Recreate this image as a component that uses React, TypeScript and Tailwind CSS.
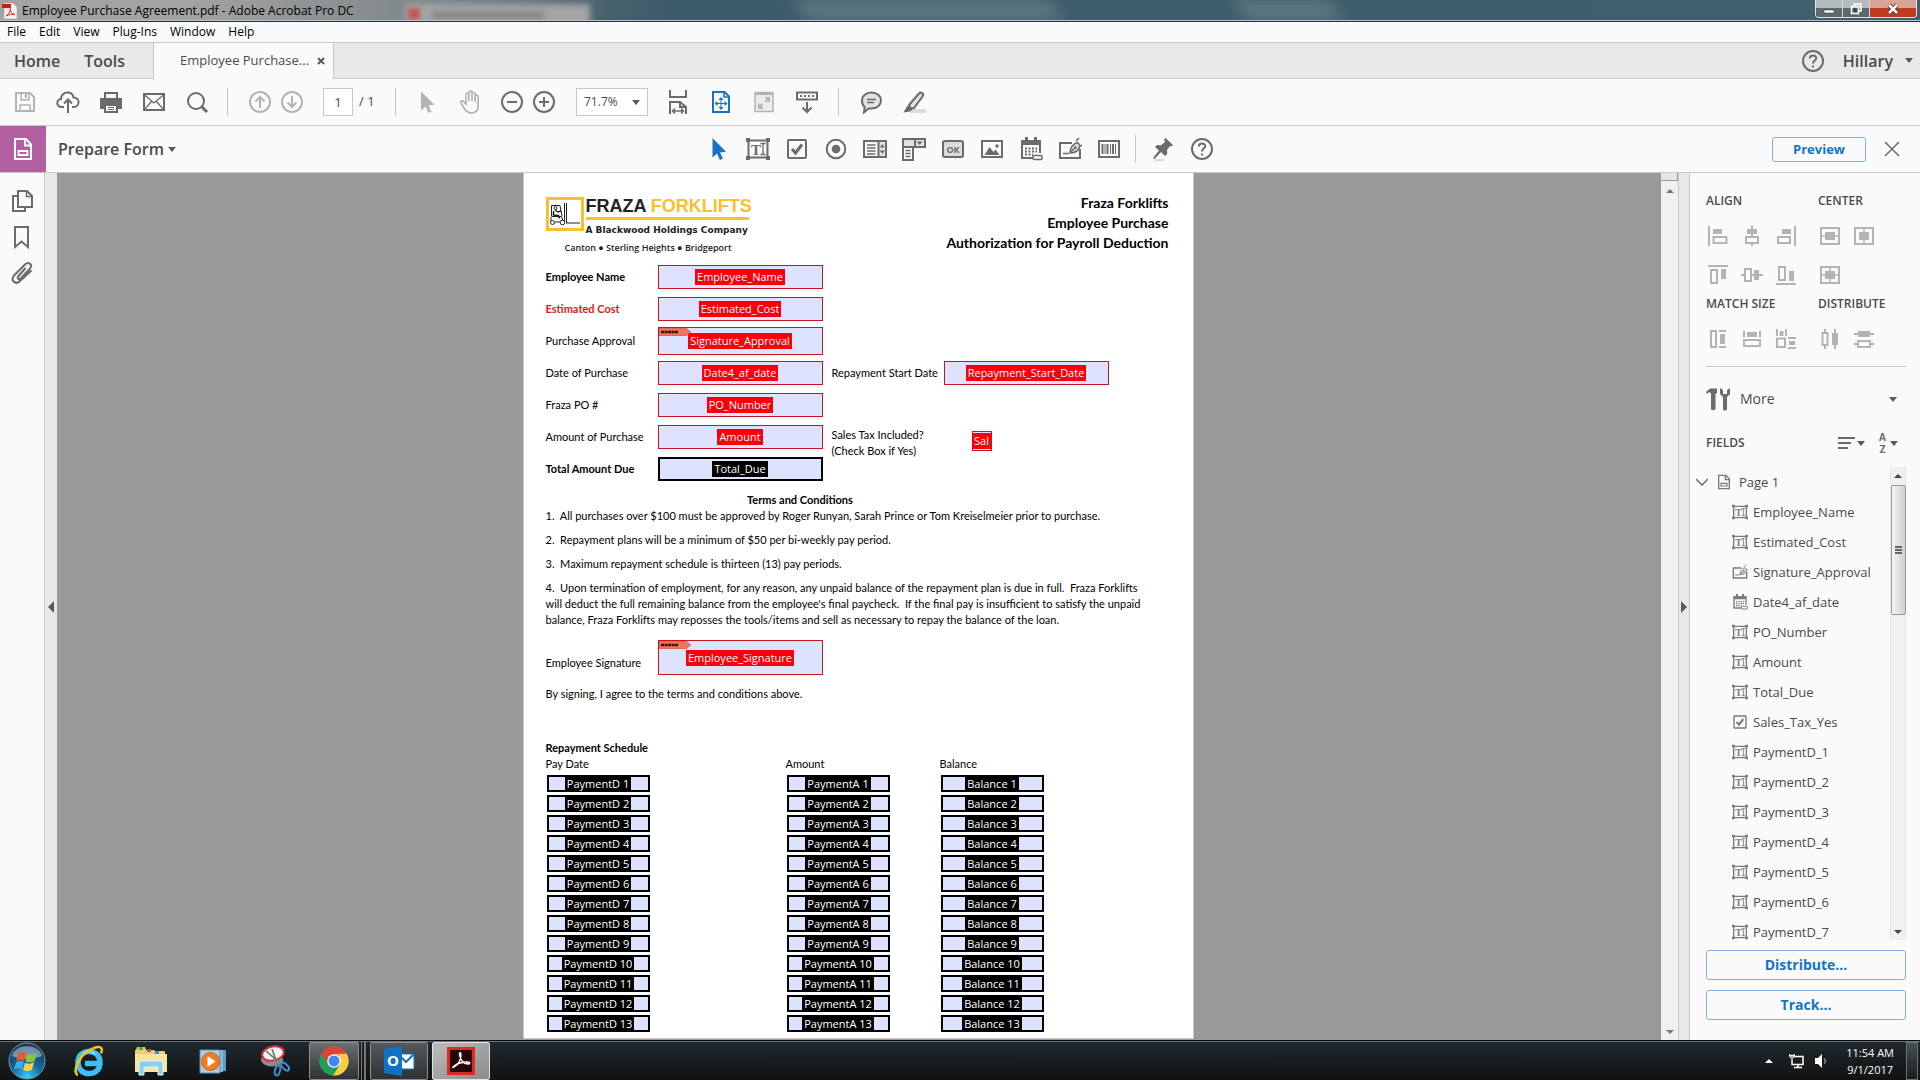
import React, { ReactNode } from "react";

type IconProps = { children: ReactNode; className?: string };

const Icon = ({ children, className = "" }: IconProps) => (
  <svg
    viewBox="0 0 24 24"
    fill="none"
    stroke="currentColor"
    strokeWidth="2"
    className={`size-6 shrink-0 ${className}`}
    aria-hidden="true"
  >
    {children}
  </svg>
);

const Caret = ({ className = "" }: { className?: string }) => (
  <svg viewBox="0 0 8 5" className={`h-[5px] w-2 shrink-0 fill-[#5a5a5a] ${className}`} aria-hidden="true">
    <path d="M0 0h8L4 5z" />
  </svg>
);

const SaveIcon = () => (
  <Icon>
    <path d="M3 3h14l4 4v14H3z" />
    <path d="M8 3v7h8V3M7 21v-6h10v6" strokeWidth="1.500" />
    <path d="M13 4v4" />
  </Icon>
);
const CloudIcon = () => (
  <Icon>
    <path d="M8 17H5.500a4 4 0 0 1 -.5-8C5 5 8 2.500 11.500 2.500c3 0 5.500 2 6 5 3 0 5 2 5 4.700S20.500 17 18 17h-2" />
    <path d="M12 23V10M8 13.500l4-4 4 4" />
  </Icon>
);
const PrintIcon = () => (
  <Icon>
    <path d="M6 8V3h12v5" />
    <path d="M1 8h22v11h-4v-4H5v4H1z" fill="currentColor" stroke="none" />
    <path d="M6 15h12v7H6z" />
    <path d="M9 17.500h6M9 19.500h6" strokeWidth="1" />
  </Icon>
);
const MailIcon = () => (
  <Icon>
    <path d="M2 4h20v16H2z" />
    <path d="M2 4.500l10 8.500 10-8.500M2.500 19.500l7-8M21.500 19.500l-7-8" strokeWidth="1.300" />
  </Icon>
);
const SearchIcon = () => (
  <Icon>
    <circle cx="11" cy="11" r="8" />
    <path d="M16.500 16.500L22 22" strokeWidth="3" />
  </Icon>
);
const UpIcon = () => (
  <Icon>
    <circle cx="12" cy="12" r="10" />
    <path d="M12 18V7M7.500 11.500L12 7l4.500 4.500" />
  </Icon>
);
const DownIcon = () => (
  <Icon>
    <circle cx="12" cy="12" r="10" />
    <path d="M12 6v11M7.500 12.500L12 17l4.500-4.500" />
  </Icon>
);
const PointerIcon = () => (
  <Icon>
    <path d="M5 1.500v19l4.500-4 3 6.500 3-1.400-3-6.300 6-.6z" fill="currentColor" stroke="none" />
  </Icon>
);
const HandIcon = () => (
  <Icon>
    <path
      d="M7 14V4.500c0-2 2.800-2 2.800 0V11V2.800c0-2.300 3.200-2.300 3.200 0V11V4c0-2.200 3.100-2.200 3.100 0V12V6.500c0-2.200 3-2.200 3 0v9.500c0 4.500-2.400 7-6.600 7-3.700 0-5.500-1.500-7.500-5l-3-4.800c-1-2.200 1.300-3 2.700-1.600z"
      strokeWidth="1.700"
    />
  </Icon>
);
const MinusIcon = () => (
  <Icon>
    <circle cx="12" cy="12" r="10" />
    <path d="M7 12h10" />
  </Icon>
);
const PlusIcon = () => (
  <Icon>
    <circle cx="12" cy="12" r="10" />
    <path d="M7 12h10M12 7v10" />
  </Icon>
);
const FitWidthIcon = () => (
  <Icon>
    <path d="M4 0v7h16V0M4 24V12h10l6 5v7M14 12v5h6" />
    <path d="M6.500 21h11M9 18.500L6.500 21 9 23.500M15 18.500l2.500 2.500-2.500 2.500" strokeWidth="1.500" />
  </Icon>
);
const FitPageIcon = () => (
  <Icon className="text-[#1473c6]">
    <path d="M4 2h11.500L20 6.500V22H4z" />
    <path d="M15 2v5h5" strokeWidth="1.500" />
    <path d="M12 7l-2.500 3h5zM12 20l-2.500-3h5zM5.500 13.500l3-2.500v5zM18.500 13.500l-3-2.500v5z" fill="currentColor" stroke="none" />
    <path d="M12 9v9M8 13.500h8" strokeWidth="1" />
  </Icon>
);
const FullScreenIcon = () => (
  <Icon>
    <path d="M3 2.500h18v19H3z" fill="#ececec" strokeWidth="1.500" />
    <path d="M3 4h18" strokeWidth="2" />
    <path d="M12.500 7H18v6zM6 13v6h6z" fill="currentColor" stroke="none" />
    <path d="M13.500 12l3-3.500M7.500 17.500l3-3.500" strokeWidth="2" />
  </Icon>
);
const KeyboardIcon = () => (
  <Icon>
    <path d="M2 2.500h20v7H2z" />
    <path d="M5 6h14" strokeDasharray="2 2" />
    <path d="M12 12v10M7.500 17.500L12 22l4.500-4.500" />
  </Icon>
);
const CommentIcon = () => (
  <Icon>
    <path d="M12.500 2.500c5.500 0 9.500 3.500 9.500 8s-4 8-9.500 8l-3 0-4.500 4 .7-5.500C3.700 15.500 3 13 3 10.500c0-4.500 4-8 9.500-8z" fill="#e3e3e3" />
    <path d="M8 9.500h9M8 12.500h7" strokeWidth="1.300" />
  </Icon>
);
const HighlightIcon = () => (
  <Icon>
    <path d="M8 19h16v4H8z" fill="#dcdcdc" stroke="none" />
    <path d="M7 15L17 3.500c2-2 5 0 3.800 2.500L12 18l-3.500.5z" fill="#e3e3e3" />
    <path d="M5.500 15.500l5 4L8 21.500l-6.500 1z" fill="currentColor" stroke="none" />
  </Icon>
);

const TextFieldIcon = () => (
  <>
    <path d="M2.500 3.500h19v17h-19z" strokeWidth="2" />
    <path d="M0 1h4v4H0zM20 1h4v4h-4zM0 19h4v4H0zM20 19h4v4h-4z" fill="currentColor" stroke="none" />
    <text x="5" y="17.500" fontSize="15" fontFamily="Liberation Serif, serif" fontWeight="bold" fill="currentColor" stroke="none">
      T
    </text>
    <path d="M14.500 6.500h5M14.500 17.500h5M17 6.500v11" strokeWidth="1.300" />
  </>
);
const CheckFieldIcon = () => (
  <>
    <rect x="3" y="3" width="18" height="18" rx="1" />
    <path d="M7 12l3.500 4L17 7.500" strokeWidth="3.200" />
  </>
);
const CalendarFieldIcon = () => (
  <>
    <path d="M14 21H3V4h18v12" />
    <path d="M3 3h18v5H3zM6 0h3v4H6zM15 0h3v4h-3z" fill="currentColor" stroke="none" />
    <path d="M6 11.500h12M6 14.500h12M6 17.500h8" strokeDasharray="2 1.500" />
    <rect x="14" y="18.500" width="9" height="4" rx="1" fill="#fff" strokeWidth="1.500" />
  </>
);
const SignFieldIcon = () => (
  <>
    <path d="M14 6H2v15h20v-9" />
    <path d="M5 16.500h6" strokeWidth="1.500" />
    <path d="M12 16c0-5 2-8.500 7.500-10.500l2.500 3C21 13.500 17.500 16 12 16zM18 4l3-3M22.500 9.500l1.500-1.500M12 16l5.500-6" fill="#e3e3e3" strokeWidth="1.500" />
    <circle cx="17.500" cy="10.500" r="1" strokeWidth="1" />
  </>
);
const PageFormIcon = () => (
  <>
    <path d="M4 2h11l5 5.500V22H4z" />
    <path d="M14 2v6.500h6" />
    <path d="M7.500 14h9v4h-9z" strokeWidth="1.800" />
  </>
);
const HelpMark = () => (
  <>
    <circle cx="12" cy="12" r="10" />
    <path d="M8.800 9.500c0-4 6.400-4 6.400-.3 0 2.300-3.200 2.500-3.200 5.300M12 16.500v2" />
  </>
);

const formTools: { label: string; className?: string; icon: ReactNode }[] = [
  {
    label: "Select object",
    className: "text-[#1473c6]",
    icon: <path d="M5.500 1v19.500l4.500-4 3 6.500 3-1.500-3-6 6-.7z" fill="currentColor" stroke="none" />,
  },
  { label: "Text field", icon: <TextFieldIcon /> },
  { label: "Check box", icon: <CheckFieldIcon /> },
  {
    label: "Radio button",
    icon: (
      <>
        <circle cx="12" cy="12" r="9.300" />
        <circle cx="12" cy="12" r="4.300" fill="currentColor" stroke="none" />
      </>
    ),
  },
  {
    label: "List box",
    icon: (
      <>
        <path d="M15 4h8v16h-8z" fill="#e3e3e3" stroke="none" />
        <path d="M1 4h22v16H1zM15.500 4v16" />
        <path d="M4 8h8.500M4 11h8.500M4 14h8.500M4 17h8.500" strokeWidth="1.500" />
        <path d="M19.300 7l2.500 3.500h-5zM19.300 17l2.500-3.500h-5z" fill="currentColor" stroke="none" />
      </>
    ),
  },
  {
    label: "Dropdown",
    icon: (
      <>
        <path d="M1 2h22v8H1z" fill="#e3e3e3" />
        <path d="M13 2v8M1 10v13h10V10" />
        <path d="M14.500 4.500h6L17.500 8z" fill="currentColor" stroke="none" />
        <path d="M3.500 13.500h5M3.500 16.500h5M3.500 19.500h5" strokeWidth="1.300" />
      </>
    ),
  },
  {
    label: "Button",
    icon: (
      <>
        <rect x="2" y="4" width="20" height="16" rx="2" fill="#dcdcdc" />
        <text x="12" y="15.500" textAnchor="middle" fontSize="9" fontFamily="Open Sans, sans-serif" fontWeight="bold" fill="currentColor" stroke="none">
          OK
        </text>
      </>
    ),
  },
  {
    label: "Image field",
    icon: (
      <>
        <path d="M2 4h20v16H2z" />
        <path d="M4.500 18l5-8 4 5 2-2.500 4 5.500z" fill="currentColor" stroke="none" />
        <circle cx="17" cy="9" r="1.700" fill="currentColor" stroke="none" />
      </>
    ),
  },
  { label: "Date field", icon: <CalendarFieldIcon /> },
  { label: "Signature field", icon: <SignFieldIcon /> },
  {
    label: "Barcode",
    icon: (
      <>
        <path d="M2 4h20v16H2z" />
        <path d="M5.500 7v10M10.500 7v10M16 7v10" strokeWidth="2" />
        <path d="M8 7v10M13.500 7v10M18.500 7v10" strokeWidth="1" />
      </>
    ),
  },
];

const alignIcons = [
  <>
    <path d="M3 2v20" />
    <path d="M7 5h9v5H7z" fill="currentColor" stroke="none" />
    <path d="M7.500 13h13v6h-13z" />
  </>,
  <>
    <path d="M12 2v20" />
    <path d="M7 5h10v5H7z" fill="currentColor" stroke="none" />
    <path d="M6 13h12v6H6z" fill="#fafafa" />
  </>,
  <>
    <path d="M21 2v20" />
    <path d="M8 5h9v5H8z" fill="currentColor" stroke="none" />
    <path d="M4 13h12v6H4z" />
  </>,
  <>
    <path d="M2 3h20" />
    <path d="M5 7h6v13H5z" />
    <path d="M15 6h5v10h-5z" fill="currentColor" stroke="none" />
  </>,
  <>
    <path d="M1 12h22" />
    <path d="M5 6h6v12H5z" fill="#fafafa" />
    <path d="M14 7h5v10h-5z" fill="currentColor" stroke="none" />
  </>,
  <>
    <path d="M2 21h20" />
    <path d="M5 4h6v13H5z" />
    <path d="M15 8h5v10h-5z" fill="currentColor" stroke="none" />
  </>,
];

const centerIcons = [
  <>
    <path d="M3 4h18v16H3z" />
    <path d="M3 12h18" strokeWidth="1.500" />
    <path d="M7 8h10v8H7z" fill="currentColor" stroke="none" />
  </>,
  <>
    <path d="M3 4h18v16H3z" />
    <path d="M12 4v16" strokeWidth="1.500" />
    <path d="M7 8h10v8H7z" fill="currentColor" stroke="none" />
  </>,
  <>
    <path d="M3 4h18v16H3z" />
    <path d="M12 4v16M3 12h18" strokeWidth="1.500" />
    <path d="M7 8h10v8H7z" fill="currentColor" stroke="none" />
  </>,
];

const matchIcons = [
  <>
    <path d="M5 4h5v16H5z" />
    <path d="M13 4h7M13 20h7" />
    <path d="M14 7h5v10h-5z" fill="currentColor" stroke="none" />
  </>,
  <>
    <path d="M4 4v6M20 4v6" />
    <path d="M7 5h10v5H7z" fill="currentColor" stroke="none" />
    <path d="M4 13h16v6H4z" />
  </>,
  <>
    <path d="M3 2v7M12 2v7" />
    <path d="M5.500 4h4v5h-4zM15 14h6v4h-6z" fill="currentColor" stroke="none" />
    <path d="M3 11.500h8V20H3zM14 11h8M14 21h8" />
  </>,
];

const distributeIcons = [
  <>
    <path d="M7 2v4M7 18v4M17 2v20" />
    <path d="M4.500 6h5v12h-5z" />
    <path d="M14 6h6v12h-6z" fill="currentColor" stroke="none" />
  </>,
  <>
    <path d="M2 7h20M2 17h4M18 17h4" />
    <path d="M6 4h12v6H6z" fill="currentColor" stroke="none" />
    <path d="M6 14h12v6H6z" />
  </>,
];

const ToolButton = ({
  label,
  children,
  className = "",
  disabled = false,
}: {
  label: string;
  children: ReactNode;
  className?: string;
  disabled?: boolean;
}) => (
  <button
    type="button"
    aria-label={label}
    disabled={disabled}
    className={`flex h-8 items-center justify-center ${disabled ? "text-[#b3b3b3]" : "text-[#6b6b6b]"} ${className}`}
  >
    {children}
  </button>
);

const Separator = ({ className = "" }: { className?: string }) => (
  <div className={`h-7 w-px bg-[#c8c8c8] ${className}`} />
);

const TitleBar = () => (
  <header className="relative flex h-[22px] shrink-0 items-center justify-between overflow-hidden border-b border-[#26333b] bg-linear-to-r from-[#8d8f90] via-[#3d5c6a] via-35% to-[#3f606c]">
    <div className="absolute inset-0 bg-linear-to-r from-[#a3a3a3] from-10% via-[#858b8e] via-20% to-transparent to-32%" />
    <div className="absolute top-1 left-[405px] h-6 w-[185px] bg-[#a5a5a5] blur-[3px]" />
    <div className="absolute top-2 left-[408px] size-3 bg-[#bf5a5a] blur-[2px]" />
    <div className="absolute top-3 left-[432px] h-1.5 w-28 bg-[#7c7c7c] blur-[3px]" />
    <div className="absolute top-0 left-[800px] h-5 w-64 skew-x-24 bg-[#5d7984] blur-[8px]" />
    <div className="absolute top-0 left-[1240px] h-5 w-24 skew-x-24 bg-[#5d7984] blur-[8px]" />
    <div className="absolute inset-x-0 bottom-0 h-px bg-[#b6c2c8]" />
    <div className="relative flex items-center gap-1 pl-0.5 text-xs leading-4 text-black">
      <svg viewBox="0 0 16 16" className="size-4" aria-hidden="true">
        <path d="M2 0h9l4 4v12H2z" fill="#f2f2f2" stroke="#a9a9a9" strokeWidth=".7" />
        <path d="M0 1h9v4H0z" fill="#c8200d" />
        <path d="M4 13c3-2 4.500-5 4.300-7.500C8 9 10 11 13 11.500 9.500 11 7 11.500 4 13z" fill="none" stroke="#e03020" />
      </svg>
      <span>Employee Purchase Agreement.pdf - Adobe Acrobat Pro DC</span>
    </div>
    <div className="relative mr-[3px] flex self-start overflow-hidden rounded-b border border-t-0 border-[#dfe5e8]">
      <button type="button" aria-label="Minimize" className="flex h-[17px] w-[27px] items-center justify-center border-r border-[#d5d8da] bg-linear-to-b from-[#b4bbbf] from-45% to-[#5d686f] to-50%">
        <svg viewBox="0 0 12 12" className="size-3" aria-hidden="true">
          <path d="M1 7h10v3H1z" fill="#fff" stroke="#444" strokeWidth=".6" />
        </svg>
      </button>
      <button type="button" aria-label="Restore" className="flex h-[17px] w-[27px] items-center justify-center border-r border-[#d5d8da] bg-linear-to-b from-[#b4bbbf] from-45% to-[#5d686f] to-50%">
        <svg viewBox="0 0 12 12" className="size-3" fill="none" stroke="#fff" strokeWidth="1.600" aria-hidden="true">
          <path d="M4 3V1h7v7H9" />
          <path d="M1.500 3.500h7v7h-7z" />
          <path d="M4 6h2v2H4z" strokeWidth="1" stroke="#333" />
        </svg>
      </button>
      <button type="button" aria-label="Close" className="flex h-[17px] w-[46px] items-center justify-center bg-linear-to-b from-[#d9a397] from-45% to-[#c03a20] to-50%">
        <svg viewBox="0 0 12 12" className="size-3" aria-hidden="true">
          <path d="M2 2l8 8M10 2l-8 8" stroke="#43201a" strokeWidth="4" />
          <path d="M2 2l8 8M10 2l-8 8" stroke="#fff" strokeWidth="2.500" />
        </svg>
      </button>
    </div>
  </header>
);

const MenuBar = () => (
  <nav className="flex h-[21px] shrink-0 items-center gap-[13px] border-b border-[#c8c8c8] bg-[#fafafa] pl-[7px] text-xs leading-4 text-black">
    {["File", "Edit", "View", "Plug-Ins", "Window", "Help"].map((item) => (
      <button type="button" key={item}>
        {item}
      </button>
    ))}
  </nav>
);

const TabBar = () => (
  <div className="flex h-9 shrink-0 items-center justify-between bg-[#e9e9e9] text-[#4b4b4b]">
    <div className="flex h-full items-stretch">
      <div className="flex w-[153px] items-center gap-6 border-b border-[#c8c8c8] pl-3.5 text-base font-semibold">
        <button type="button">Home</button>
        <button type="button">Tools</button>
      </div>
      <div className="flex w-[181px] items-center border-x border-[#c8c8c8] bg-[#fafafa] pl-[26px]">
        <span className="text-[13px]">Employee Purchase...</span>
        <button type="button" aria-label="Close tab" className="ml-2">
          <svg viewBox="0 0 8 8" className="size-2" stroke="#5a5a5a" strokeWidth="2" aria-hidden="true">
            <path d="M1 1l6 6M7 1L1 7" />
          </svg>
        </button>
      </div>
    </div>
    <div className="flex h-full flex-1 items-center justify-end border-b border-[#c8c8c8] pr-[7px]">
      <button type="button" aria-label="Help" className="text-[#6b6b6b]">
        <Icon>
          <HelpMark />
        </Icon>
      </button>
      <button type="button" className="ml-[18px] flex items-center gap-3 text-base font-semibold">
        Hillary
        <Caret />
      </button>
    </div>
  </div>
);

const MainToolbar = () => (
  <div className="flex h-[47px] shrink-0 items-center border-b border-[#c8c8c8] bg-[#fafafa] pl-[3px] text-[13px] text-[#4b4b4b]">
    <ToolButton label="Save" disabled className="w-[43px]">
      <SaveIcon />
    </ToolButton>
    <ToolButton label="Upload" className="w-[43px]">
      <CloudIcon />
    </ToolButton>
    <ToolButton label="Print" className="w-[43px]">
      <PrintIcon />
    </ToolButton>
    <ToolButton label="Mail" className="w-[43px]">
      <MailIcon />
    </ToolButton>
    <ToolButton label="Find" className="w-[43px]">
      <SearchIcon />
    </ToolButton>
    <Separator className="mr-4 ml-[9px]" />
    <ToolButton label="Previous page" disabled className="w-8">
      <UpIcon />
    </ToolButton>
    <ToolButton label="Next page" disabled className="w-8">
      <DownIcon />
    </ToolButton>
    <input
      aria-label="Page number"
      defaultValue="1"
      className="ml-[15px] h-7 w-[30px] border border-[#c8c8c8] bg-white text-center outline-none"
    />
    <span className="ml-1.5 w-9">/ 1</span>
    <Separator className="mr-2.5" />
    <ToolButton label="Select" disabled className="w-[43px]">
      <PointerIcon />
    </ToolButton>
    <ToolButton label="Hand" disabled className="w-[43px]">
      <HandIcon />
    </ToolButton>
    <ToolButton label="Zoom out" className="ml-1 w-8">
      <MinusIcon />
    </ToolButton>
    <ToolButton label="Zoom in" className="w-8">
      <PlusIcon />
    </ToolButton>
    <div className="relative ml-4">
      <select aria-label="Zoom level" className="h-7 w-[72px] appearance-none border border-[#c8c8c8] bg-white pl-[7px] text-xs outline-none">
        <option>71.7%</option>
      </select>
      <Caret className="pointer-events-none absolute top-3 right-2" />
    </div>
    <ToolButton label="Fit width" className="ml-2 w-[43px]">
      <FitWidthIcon />
    </ToolButton>
    <ToolButton label="Fit page" className="w-[43px]">
      <FitPageIcon />
    </ToolButton>
    <ToolButton label="Full screen" disabled className="w-[43px]">
      <FullScreenIcon />
    </ToolButton>
    <ToolButton label="Show toolbar" className="w-[43px]">
      <KeyboardIcon />
    </ToolButton>
    <Separator className="mx-2.5" />
    <ToolButton label="Comment" className="w-[43px]">
      <CommentIcon />
    </ToolButton>
    <ToolButton label="Highlight" className="w-[43px]">
      <HighlightIcon />
    </ToolButton>
  </div>
);

const FormToolbar = () => (
  <div className="grid h-[47px] shrink-0 grid-cols-[1fr_auto_1fr] items-center border-b border-[#c8c8c8] bg-[#fafafa]">
    <div className="flex h-full items-center">
      <div className="flex h-full w-[46px] items-center justify-center bg-[#b2609f] text-white">
        <Icon>
          <PageFormIcon />
        </Icon>
      </div>
      <button type="button" className="ml-3 flex items-center gap-1 text-base font-semibold text-[#4b4b4b]">
        Prepare Form
        <Caret />
      </button>
    </div>
    <div className="flex items-center">
      {formTools.map((tool) => (
        <ToolButton key={tool.label} label={tool.label} className="w-[39px]">
          <Icon className={tool.className}>{tool.icon}</Icon>
        </ToolButton>
      ))}
      <Separator className="mx-[7px]" />
      <ToolButton label="Keep tool selected" className="w-[39px]">
        <Icon>
          <path d="M3 22h10v2H3z" fill="#dcdcdc" stroke="none" />
          <path d="M14.500 1L22 8l-1.500 1.500-1.500-.5-3 4 .3 4L14 19l-4-4-6.500 7L2 21l6-7.500-4-3.500 2-2 4 .2 4-3.200L13 2.500z" fill="currentColor" stroke="none" />
        </Icon>
      </ToolButton>
      <ToolButton label="Help" className="w-[39px]">
        <Icon>
          <HelpMark />
        </Icon>
      </ToolButton>
    </div>
    <div className="flex items-center justify-end pr-5">
      <button type="button" className="h-[25px] w-[94px] rounded-[3px] border border-[#7fb0e0] text-[13px] leading-none font-bold text-[#1473c6]">
        Preview
      </button>
      <button type="button" aria-label="Close" className="ml-[18px] text-[#6b6b6b]">
        <svg viewBox="0 0 16 16" className="size-4" stroke="currentColor" strokeWidth="1.500" aria-hidden="true">
          <path d="M1 1l14 14M15 1L1 15" />
        </svg>
      </button>
    </div>
  </div>
);

const SideRail = () => (
  <aside className="flex shrink-0">
    <div className="flex w-[45px] flex-col items-center gap-3 border-r border-[#c8c8c8] bg-[#fafafa] pt-4 text-[#6b6b6b]">
      <button type="button" aria-label="Page thumbnails">
        <Icon>
          <path d="M7 7H3v15h12v-4" />
          <path d="M8 2h9l5 5v11H8z" />
          <path d="M16.500 2v5.500H22" strokeWidth="1.500" />
        </Icon>
      </button>
      <button type="button" aria-label="Bookmarks">
        <Icon>
          <path d="M5 2h13v20l-6.500-5.500L5 22z" />
        </Icon>
      </button>
      <button type="button" aria-label="Attachments">
        <Icon>
          <path d="M15.500 7l-7.300 8.500c-1.500 2 .8 3.800 2.500 2L20 7.500c3-4-1.500-7.500-5-4L4 14.500c-4 5 1.500 10 6 5.500L21.500 9.500" />
        </Icon>
      </button>
    </div>
    <button type="button" aria-label="Collapse navigation pane" className="flex w-3 items-center justify-center bg-[#e9e9e9]">
      <svg viewBox="0 0 6 12" className="h-3 w-1.5 fill-[#5a5a5a]" aria-hidden="true">
        <path d="M6 0v12L0 6z" />
      </svg>
    </button>
  </aside>
);

type FieldProps = {
  id: string;
  value?: string;
  className?: string;
  required?: boolean;
  sign?: boolean;
};

const FormField = ({ id, value, className = "h-6 w-[165px]", required = true, sign = false }: FieldProps) => (
  <div
    className={`relative flex items-center justify-center bg-[#dde2ff] ${required ? "border border-[#c8141e]" : "border-2 border-black"} ${className}`}
  >
    {sign && (
      <svg viewBox="0 0 32 8" className="absolute top-0 left-0 h-2 w-8" aria-hidden="true">
        <path d="M0 0h27l5 4-5 4H0z" fill="#f0745a" stroke="#b2503c" strokeWidth=".5" />
        <path d="M2 4h17" stroke="#3a1510" strokeWidth="2.500" strokeDasharray="3 .5" />
      </svg>
    )}
    <input
      id={id}
      readOnly
      value={value ?? id}
      className={`field-sizing-content h-4 px-0.5 font-['Open_Sans',sans-serif] text-[11px] leading-4 text-white outline-none ${required ? "bg-[#fb0007]" : "bg-black"}`}
    />
  </div>
);

const formRows = [
  { label: "Employee Name", id: "Employee_Name", className: "font-bold" },
  { label: "Estimated Cost", id: "Estimated_Cost", className: "font-bold text-[#e01a1a]" },
  { label: "Purchase Approval", id: "Signature_Approval", sign: true },
  { label: "Date of Purchase", id: "Date4_af_date" },
  { label: "Fraza PO #", id: "PO_Number" },
  { label: "Amount of Purchase", id: "Amount" },
  { label: "Total Amount Due", id: "Total_Due", className: "font-bold", calculated: true },
];

const FrazaLogo = () => (
  <div className="w-[210px]">
    <div className="flex gap-0.5">
      <svg viewBox="0 0 38 34" className="h-[34px] w-[38px]" fill="none" aria-hidden="true">
        <path d="M1.500 1.500h35v31h-35z" stroke="#f9bf2c" strokeWidth="3" />
        <g stroke="#222" strokeWidth="1">
          <path d="M5.500 19V8.500h8.500l2 10.500M5.500 19.500h10l1.500 5M5 20v4M9 25h6M18.500 6v20M20.500 6v20M20 26h14" />
          <circle cx="9.500" cy="11" r="1.500" />
          <path d="M9 13l3 2 3-1M7.500 14v4l5 .5 1 3" strokeWidth="1.500" />
          <circle cx="6.500" cy="25.500" r="2" fill="#fff" />
          <circle cx="16.500" cy="25.500" r="2.300" fill="#fff" />
        </g>
      </svg>
      <div>
        <p className="font-['Liberation_Sans',sans-serif] text-lg leading-[18px] font-bold whitespace-nowrap text-[#222]">
          FRAZA <span className="text-[#f9bf2c]">FORKLIFTS</span>
        </p>
        <div className="mt-0.5 h-[3px] w-[163px] bg-[#f9bf2c]" />
        <p className="mt-1 font-['DejaVu_Sans',sans-serif] text-[9px] leading-3 font-bold whitespace-nowrap text-[#222]">
          A Blackwood Holdings Company
        </p>
      </div>
    </div>
    <p className="mt-1.5 pl-[19px] font-['Open_Sans',sans-serif] text-[9px] leading-3 font-semibold whitespace-nowrap text-[#222]">
      Canton ● Sterling Heights ● Bridgeport
    </p>
  </div>
);

const ScheduleTable = () => (
  <table className="border-collapse text-left">
    <thead>
      <tr>
        <th className="w-60 p-0 font-normal">Pay Date</th>
        <th className="w-[154px] p-0 font-normal">Amount</th>
        <th className="w-[104px] p-0 font-normal">Balance</th>
      </tr>
    </thead>
    <tbody>
      {Array.from({ length: 13 }, (_, index) => index + 1).map((row) => (
        <tr key={row}>
          {["PaymentD", "PaymentA", "Balance"].map((name) => (
            <td key={name} className="p-0 pt-[3px]">
              <FormField id={`${name}_${row}`} value={`${name} ${row}`} required={false} className="ml-px h-[17px] w-[103px]" />
            </td>
          ))}
        </tr>
      ))}
    </tbody>
  </table>
);

const DocumentPage = () => (
  <article className="w-[671px] border-x border-b border-[#c8c8c8] bg-white pr-6 pb-1.5 pl-[22px] font-['Lato',sans-serif] text-[11px] leading-4 text-black">
    <div className="flex h-[88px] items-start justify-between pt-6">
      <FrazaLogo />
      <h1 className="-mt-1 text-right text-sm leading-5 font-bold">
        Fraza Forklifts
        <br />
        Employee Purchase
        <br />
        Authorization for Payroll Deduction
      </h1>
    </div>
    <div className="flex">
      <div>
        {formRows.map((row) => (
          <div key={row.id} className="flex h-8 items-center">
            <label htmlFor={row.id} className={`w-28 ${row.className ?? ""}`}>
              {row.label}
            </label>
            <FormField id={row.id} sign={row.sign} required={!row.calculated} className={row.sign ? "h-7 w-[165px]" : "h-6 w-[165px]"} />
          </div>
        ))}
      </div>
      <div className="pt-24 pl-[9px]">
        <div className="flex h-8 items-center">
          <label htmlFor="Repayment_Start_Date" className="w-28">
            Repayment Start Date
          </label>
          <FormField id="Repayment_Start_Date" />
        </div>
        <div className="flex pt-[38px]">
          <label htmlFor="Sales_Tax_Yes" className="w-[140px]">
            Sales Tax Included?
            <br />
            (Check Box if Yes)
          </label>
          <FormField id="Sales_Tax_Yes" value="Sal" className="mt-1 h-5 w-5 p-px" />
        </div>
      </div>
    </div>
    <h2 className="mt-[7px] mr-[114px] text-center font-bold">Terms and Conditions</h2>
    <div className="flex flex-col gap-2 whitespace-pre">
      <p>1.  All purchases over $100 must be approved by Roger Runyan, Sarah Prince or Tom Kreiselmeier prior to purchase.</p>
      <p>2.  Repayment plans will be a minimum of $50 per bi-weekly pay period.</p>
      <p>3.  Maximum repayment schedule is thirteen (13) pay periods.</p>
      <p>
        4.  Upon termination of employment, for any reason, any unpaid balance of the repayment plan is due in full.  Fraza Forklifts
        <br />
        will deduct the full remaining balance from the employee's final paycheck.  If the final pay is insufficient to satisfy the unpaid
        <br />
        balance, Fraza Forklifts may reposses the tools/items and sell as necessary to repay the balance of the loan.
      </p>
    </div>
    <div className="mt-3 flex h-[35px] items-end">
      <label htmlFor="Employee_Signature" className="w-28 pb-1">
        Employee Signature
      </label>
      <FormField id="Employee_Signature" sign className="h-[35px] w-[165px]" />
    </div>
    <p className="mt-[11px]">By signing, I agree to the terms and conditions above.</p>
    <h2 className="mt-[38px] font-bold">Repayment Schedule</h2>
    <ScheduleTable />
  </article>
);

const DocumentView = () => (
  <main className="flex min-w-0 flex-1">
    <div className="flex flex-1 items-start justify-center overflow-hidden bg-[#999999] pr-0.5">
      <DocumentPage />
    </div>
    <div className="flex w-[17px] flex-col items-center justify-between bg-[#f0f0f0] pb-1.5">
      <div className="w-full">
        <div className="h-2 w-full border-r border-b border-[#999] bg-[#e6e6e6]" />
        <svg viewBox="0 0 8 4" className="mx-auto mt-2 h-1 w-2 fill-[#777]" aria-hidden="true">
          <path d="M4 0l4 4H0z" />
        </svg>
      </div>
      <svg viewBox="0 0 8 4" className="h-1 w-2 fill-[#777]" aria-hidden="true">
        <path d="M0 0h8L4 4z" />
      </svg>
    </div>
  </main>
);

const IconGroup = ({ title, icons, className }: { title: string; icons: ReactNode[]; className: string }) => (
  <section className={className}>
    <h3 className="text-xs leading-4 font-semibold">{title}</h3>
    <div className="mt-[7px] flex flex-wrap text-[#b3b3b3]">
      {icons.map((icon, index) => (
        <button type="button" key={index} disabled aria-label={`${title} ${index + 1}`} className="flex h-[39px] w-[34px] items-center">
          <Icon>{icon}</Icon>
        </button>
      ))}
    </div>
  </section>
);

const fields = [
  "Employee_Name",
  "Estimated_Cost",
  "Signature_Approval",
  "Date4_af_date",
  "PO_Number",
  "Amount",
  "Total_Due",
  "Sales_Tax_Yes",
  "PaymentD_1",
  "PaymentD_2",
  "PaymentD_3",
  "PaymentD_4",
  "PaymentD_5",
  "PaymentD_6",
  "PaymentD_7",
];

const fieldIcon = (name: string) => {
  if (name === "Signature_Approval") return <SignFieldIcon />;
  if (name === "Date4_af_date") return <CalendarFieldIcon />;
  if (name === "Sales_Tax_Yes") return <CheckFieldIcon />;
  return <TextFieldIcon />;
};

const FieldsPanel = () => (
  <aside className="flex shrink-0">
    <button type="button" aria-label="Collapse tools pane" className="flex w-3 items-center justify-center border-x border-[#c8c8c8] bg-[#e9e9e9]">
      <svg viewBox="0 0 6 12" className="h-3 w-1.5 fill-[#5a5a5a]" aria-hidden="true">
        <path d="M0 0l6 6-6 6z" />
      </svg>
    </button>
    <div className="flex w-[230px] flex-col bg-[#fafafa] pr-3.5 pl-4 text-[#4b4b4b]">
      <div className="flex pt-5">
        <IconGroup title="ALIGN" icons={alignIcons} className="w-28" />
        <IconGroup title="CENTER" icons={centerIcons} className="w-[88px]" />
      </div>
      <div className="flex border-b border-[#c8c8c8] pt-0.5 pb-2">
        <IconGroup title="MATCH SIZE" icons={matchIcons} className="w-28" />
        <IconGroup title="DISTRIBUTE" icons={distributeIcons} className="w-[88px]" />
      </div>
      <button type="button" className="mt-5 flex h-6 items-center">
        <Icon className="text-[#6b6b6b]">
          <path d="M0 5l4-3.500h7v5H9.500V22c0 1.500-4.500 1.500-4.500 0V6.500L3 5 1 7z" fill="currentColor" stroke="none" />
          <path d="M14 1v6l3 3v12c0 2 4 2 4 0V10l3-3V1l-3 2v4h-4V3z" fill="currentColor" stroke="none" />
        </Icon>
        <span className="ml-2.5 text-sm leading-5">More</span>
        <Caret className="mr-[9px] ml-auto" />
      </button>
      <div className="mt-5 flex h-6 items-center">
        <h3 className="text-xs leading-4 font-semibold">FIELDS</h3>
        <button type="button" aria-label="Sort order" className="ml-auto flex items-center gap-0.5">
          <svg viewBox="0 0 17 14" className="h-3.5 w-[17px]" stroke="#6b6b6b" strokeWidth="2" aria-hidden="true">
            <path d="M0 2h17M0 7h13M0 12h10" />
          </svg>
          <Caret />
        </button>
        <button type="button" aria-label="Sort alphabetically" className="mr-2 ml-3.5 flex items-center gap-1">
          <span className="flex flex-col text-[10px] leading-3 font-bold text-[#6b6b6b]">
            <span>A</span>
            <span>Z</span>
          </span>
          <Caret />
        </button>
      </div>
      <div className="mt-3 flex min-h-0 flex-1">
        <div className="-ml-2.5 min-h-0 flex-1 overflow-hidden text-[13px] leading-4">
          <div className="flex h-[30px] items-center">
            <svg viewBox="0 0 12 8" className="h-2 w-3" fill="none" stroke="#6b6b6b" strokeWidth="1.500" aria-hidden="true">
              <path d="M0 1l6 6 6-6" />
            </svg>
            <Icon className="ml-2 size-4! text-[#7a7a7a]">
              <PageFormIcon />
            </Icon>
            <span className="ml-[7px]">Page 1</span>
          </div>
          <ul>
            {fields.map((name) => (
              <li key={name} className="flex h-[30px] items-center pl-9">
                <Icon className="size-4! text-[#7a7a7a]">{fieldIcon(name)}</Icon>
                <span className="ml-[5px]">{name}</span>
              </li>
            ))}
          </ul>
        </div>
        <div className="flex w-4 flex-col items-center border-x border-[#e6e6e6] bg-[#f0f0f0]">
          <svg viewBox="0 0 8 4" className="mt-[7px] h-1 w-2 fill-[#444]" aria-hidden="true">
            <path d="M4 0l4 4H0z" />
          </svg>
          <div className="mt-[7px] flex h-[130px] w-[15px] flex-col items-center justify-center gap-px rounded-xs border border-[#979797] bg-linear-to-r from-[#f5f5f5] to-[#cfcfcf]">
            <span className="h-0.5 w-[7px] bg-[#666]" />
            <span className="h-0.5 w-[7px] bg-[#666]" />
            <span className="h-0.5 w-[7px] bg-[#666]" />
          </div>
          <svg viewBox="0 0 8 4" className="mt-auto mb-1.5 h-1 w-2 fill-[#444]" aria-hidden="true">
            <path d="M0 0h8L4 4z" />
          </svg>
        </div>
      </div>
      <div className="mt-2.5 mb-5 flex flex-col gap-2.5">
        {["Distribute...", "Track..."].map((label) => (
          <button type="button" key={label} className="h-[30px] rounded-[3px] border border-[#7fb0e0] text-sm leading-5 font-bold text-[#1473c6]">
            {label}
          </button>
        ))}
      </div>
    </div>
  </aside>
);

const StartIcon = () => (
  <svg viewBox="0 0 38 38" className="size-[38px]" aria-hidden="true">
    <defs>
      <radialGradient id="orb" cx=".5" cy=".95" r=".9">
        <stop offset="0" stopColor="#35d3ff" />
        <stop offset=".45" stopColor="#146a9f" />
        <stop offset="1" stopColor="#173a58" />
      </radialGradient>
    </defs>
    <circle cx="19" cy="19" r="18" fill="url(#orb)" stroke="#7795a8" />
    <path d="M4 14C7 1 31 1 34 14c-9 4-21 4-30 0z" fill="#fff" opacity=".4" />
    <path d="M10 12c3-2.500 6-2 8-.8l-2 7.600c-2-1.200-5-1.400-7.700.5z" fill="#f0562a" />
    <path d="M19.500 12c3 1.500 6 1.400 9-.5l-2 7.500c-3 1.800-6 1.600-9 .4z" fill="#8cc63f" />
    <path d="M8 20.500c3-2 6-1.600 7.800-.4l-2 7.500c-2-1.300-5-1.500-7.800.4z" fill="#3fa9f5" />
    <path d="M17 20.700c3 1.400 6 1.300 9-.5l-2 7.600c-3 1.700-6 1.600-9 .3z" fill="#ffd23f" />
  </svg>
);
const ExplorerIcon = () => (
  <svg viewBox="0 0 32 32" className="size-8" fill="none" aria-hidden="true">
    <path d="M27 21c-2 5-6 7.500-11 7.500C9.500 28.500 5 24 5 17.500S9.500 6.500 16 6.500s11.500 4.500 11 12H12" stroke="#3fbcf2" strokeWidth="5.500" />
    <path d="M10 8c4-2 9-2 12 1" stroke="#b9ecff" strokeWidth="1.500" />
    <path d="M5 30C-2 27 7 8 20 3.500c6-2.500 11-2 8 5" stroke="#f5c31d" strokeWidth="2.500" />
  </svg>
);
const FolderIcon = () => (
  <svg viewBox="0 0 34 32" className="h-8 w-[34px]" aria-hidden="true">
    <path d="M2 5l1-3h8l1 3h8l1 1h10v20H1V5z" fill="#e8cf7a" />
    <path d="M5 2h4v3H5z" fill="#4cae3c" />
    <path d="M13 4h4v3h-4z" fill="#d8452c" />
    <path d="M21 6h4v3h-4z" fill="#3a8fd8" />
    <path d="M1 9h32v18H1z" fill="#f6e5a1" />
    <path d="M5 18q0-2 2-2h20q2 0 2 2v12h-5v-8H10v8H5z" fill="#8fcdec" stroke="#e2f5ff" />
  </svg>
);
const MediaIcon = () => (
  <svg viewBox="0 0 30 30" className="size-[30px]" aria-hidden="true">
    <path d="M8 4h20v21H8z" fill="#5c9cc6" />
    <path d="M5 4h20v22H5z" fill="#86bbdb" />
    <path d="M2 4h20v23H2z" fill="#a9cfe6" stroke="#5c8fb0" />
    <circle cx="12.500" cy="15.500" r="9" fill="#f47b20" stroke="#d65f0c" />
    <path d="M9.500 10l8 5.500-8 5.500z" fill="#fff" />
  </svg>
);
const SnipIcon = () => (
  <svg viewBox="0 0 32 32" className="size-8" fill="none" aria-hidden="true">
    <ellipse cx="13" cy="15" rx="11" ry="6.500" fill="#8d8d8d" />
    <ellipse cx="14" cy="8.500" rx="11" ry="7" fill="#f3f3f3" stroke="#d5303e" strokeWidth="2" transform="rotate(-12 14 8.500)" />
    <path d="M7 6l15 13M13 4l6 17" stroke="#9aa4aa" strokeWidth="2" />
    <path d="M7 6l15 13M13 4l6 17" stroke="#4b4b4b" strokeWidth=".7" />
    <ellipse cx="18.500" cy="25.500" rx="2.500" ry="5" stroke="#3b8fd0" strokeWidth="2" transform="rotate(15 18.500 25.500)" />
    <ellipse cx="26" cy="21.500" rx="2.500" ry="5" stroke="#3b8fd0" strokeWidth="2" transform="rotate(-45 26 21.500)" />
  </svg>
);
const ChromeIcon = () => (
  <svg viewBox="0 0 30 30" className="size-[30px]" aria-hidden="true">
    <circle cx="15" cy="15" r="14.500" fill="#4caf50" />
    <path d="M2.400 7.800A14.500 14.500 0 0 1 27.600 7.800L15 8.500 9 18.500z" fill="#db4437" />
    <path d="M27.600 7.800A14.500 14.500 0 0 1 14 29.500L21.500 18 20 9l-5-1z" fill="#ffcd40" />
    <path d="M2.400 7.800A14.500 14.500 0 0 0 14 29.500l6-10-11-1z" fill="#1fa05a" />
    <circle cx="15" cy="15" r="6.800" fill="#fff" />
    <circle cx="15" cy="15" r="5.500" fill="#4286f5" />
  </svg>
);
const OutlookIcon = () => (
  <svg viewBox="0 0 32 32" className="size-8" aria-hidden="true">
    <path d="M16 9h15v15H16z" fill="#fff" stroke="#1072c5" />
    <path d="M17 11l6 6 8-8" fill="none" stroke="#1072c5" strokeWidth="2" />
    <path d="M1 4l18-3v30L1 28z" fill="#1072c5" />
    <text x="10" y="21" textAnchor="middle" fontSize="15" fontWeight="bold" fontFamily="Open Sans, sans-serif" fill="#fff">
      O
    </text>
  </svg>
);
const AcrobatIcon = () => (
  <svg viewBox="0 0 28 28" className="size-7" fill="none" aria-hidden="true">
    <path d="M1.500 1.500h25v25h-25z" fill="#2b0506" stroke="#dc2b20" strokeWidth="3" />
    <path d="M6 20.500c5-2 8.500-8 8-13.500-.5-2.500-2-1-1.500 1 1 5 4 9 9 9 2 0 1.500-2-1-2-5 0-9.500 1-13.500 4-1.500 1-1.500 2-1 1.500z" stroke="#fff" strokeWidth="1.300" />
  </svg>
);

const Taskbar = () => (
  <footer className="flex h-10 shrink-0 items-stretch justify-between border-t border-[#0a0f12] bg-linear-to-b from-[#20292f] to-[#121212] text-white">
    <div className="flex border-t border-[#6d7477]">
      <button type="button" aria-label="Start" className="flex w-[54px] items-center justify-center">
        <StartIcon />
      </button>
      {[
        { label: "Internet Explorer", icon: <ExplorerIcon /> },
        { label: "File Explorer", icon: <FolderIcon /> },
        { label: "Media Player", icon: <MediaIcon /> },
        { label: "Snipping Tool", icon: <SnipIcon /> },
      ].map((item) => (
        <button type="button" key={item.label} aria-label={item.label} className="flex w-[62px] items-center justify-center pl-2">
          {item.icon}
        </button>
      ))}
      <button type="button" aria-label="Chrome" className="ml-[7px] flex border-r border-[#777]">
        <span className="flex h-[38px] w-[50px] items-center justify-center rounded-xs border border-[#8b8f91] bg-linear-to-b from-[#6c7072] to-[#2e3233]">
          <ChromeIcon />
        </span>
        <span className="ml-0.5 h-full w-1 border-x border-[#777]" />
      </button>
      <button type="button" aria-label="Outlook" className="ml-1 flex w-[58px] items-center justify-center rounded-xs border border-[#8b8f91] bg-linear-to-b from-[#55595b] to-[#2e3233]">
        <OutlookIcon />
      </button>
      <button type="button" aria-label="Acrobat" className="ml-1 flex w-[58px] items-center justify-center rounded-xs border border-[#e2e2e2] bg-linear-to-br from-[#bdbdbd] to-[#8b8b8b]">
        <AcrobatIcon />
      </button>
    </div>
    <div className="flex flex-1 items-center justify-end border-t border-[#6d7477]">
      <svg viewBox="0 0 8 4" className="mr-[15px] h-1 w-2 fill-white" aria-hidden="true">
        <path d="M4 0l4 4H0z" />
      </svg>
      <svg viewBox="0 0 16 16" className="mr-2.5 size-4" fill="none" stroke="#fff" aria-hidden="true">
        <path d="M6 3.500h9v8H4v-4M10 12v2.500M6 14.500h8" strokeWidth="1.500" />
        <path d="M2 1v3h4V1M4 4v4M1 2.500h6" strokeWidth="1.200" />
      </svg>
      <svg viewBox="0 0 14 16" className="mr-[18px] h-4 w-3.5" aria-hidden="true">
        <path d="M1 5h3l4-4v14l-4-4H1z" fill="#fff" />
        <path d="M10.500 5.500q2 2.500 0 5" fill="none" stroke="#ccc" />
      </svg>
      <time className="mr-3 text-center text-[11px] leading-[17px]">
        11:54 AM
        <br />
        9/1/2017
      </time>
      <button type="button" aria-label="Show desktop" className="mr-0.5 h-full w-3 border border-[#6d7477] bg-linear-to-b from-[#4a5053] to-[#1a1d1e]" />
    </div>
  </footer>
);

const App = () => (
  <div className="flex h-screen flex-col overflow-hidden bg-[#fafafa] font-['Open_Sans',sans-serif]">
    <TitleBar />
    <MenuBar />
    <TabBar />
    <MainToolbar />
    <FormToolbar />
    <div className="flex min-h-0 flex-1">
      <SideRail />
      <DocumentView />
      <FieldsPanel />
    </div>
    <Taskbar />
  </div>
);

export default App;
